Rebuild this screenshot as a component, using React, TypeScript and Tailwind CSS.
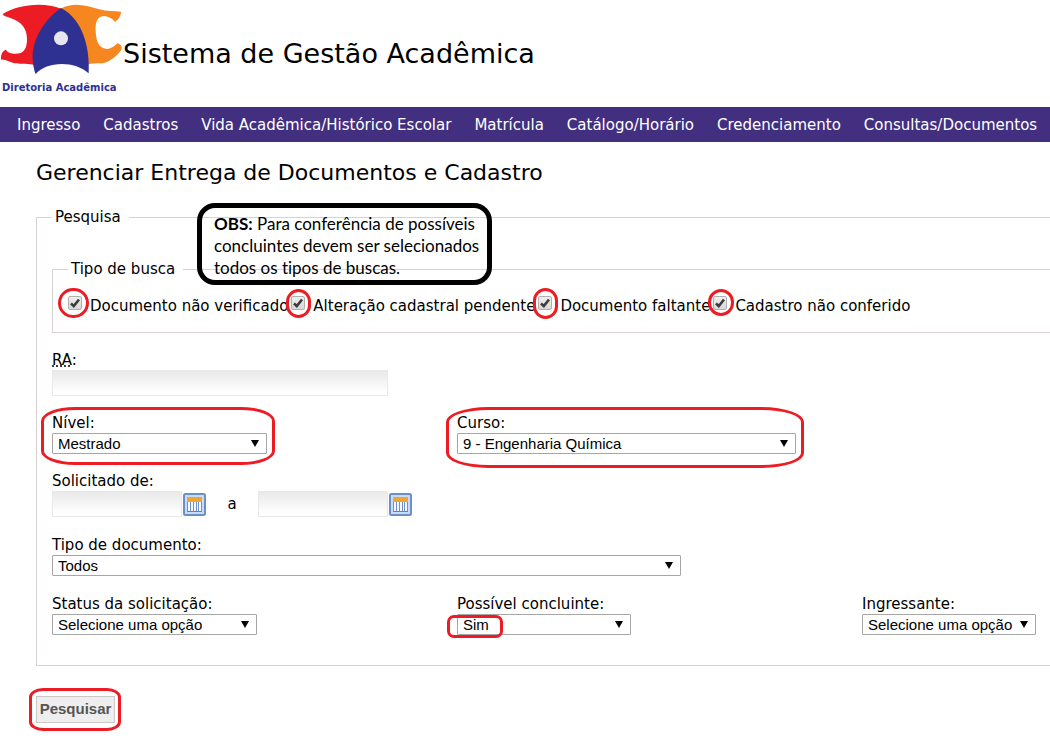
import { useId, type ReactNode } from "react";

const MENU = [
  "Ingresso",
  "Cadastros",
  "Vida Acadêmica/Histórico Escolar",
  "Matrícula",
  "Catálogo/Horário",
  "Credenciamento",
  "Consultas/Documentos",
];

const SEARCH_TYPES = [
  { label: "Documento não verificado", ring: "-left-[10px] -right-[7px] -top-[8px] -bottom-[8px]" },
  { label: "Alteração cadastral pendente", ring: "-left-[5px] -right-[6px] -top-[7px] -bottom-[8px]" },
  { label: "Documento faltante", ring: "-left-[5px] -right-[6px] -top-[8px] -bottom-[9px]" },
  { label: "Cadastro não conferido", ring: "-left-[5px] -right-[7px] -top-[7px] -bottom-[6px]" },
];

function Logo() {
  return (
    <div className="flex w-[122px] shrink-0 flex-col">
      <svg viewBox="0 0 366 240" className="h-20 w-full" aria-hidden="true">
        <path
          d="M8 42 C50 14 130 4 184 26 L110 196 C84 190 64 194 44 190 C28 186 14 176 3 179 C2 166 6 152 18 149 C24 162 48 164 64 158 C82 150 84 118 78 96 C70 66 40 56 12 47Z"
          fill="#ed1c24"
        />
        <path
          d="M182 26 C222 4 262 18 298 28 C320 34 344 34 363 35 C362 50 354 60 345 65 C330 48 308 42 296 54 C284 66 286 92 289 112 C292 136 308 150 326 146 C340 143 346 136 352 130 C366 134 368 146 362 152 C346 172 324 190 298 190 C286 190 276 190 262 194Z"
          fill="#f6861f"
        />
        <path
          d="M183 24 C132 58 98 120 98 170 C98 190 102 210 107 222 C140 182 226 182 266 220 C270 150 252 60 183 24Z"
          fill="#2e3192"
        />
        <circle cx="183" cy="115" r="21" fill="#e6e7ee" />
      </svg>
      <span className="pl-[2px] font-['DejaVu_Sans'] text-[10px] leading-4 font-bold whitespace-nowrap text-[#2e3192]">
        Diretoria Acadêmica
      </span>
    </div>
  );
}

// red highlight placed around its relative parent
function Mark({ className }: { className: string }) {
  return (
    <span
      aria-hidden="true"
      className={`pointer-events-none absolute border-[#ed1c24] ${className}`}
    />
  );
}

function CheckOption({ label, ring }: { label: string; ring: string }) {
  const id = useId();
  return (
    <div className="flex items-start">
      <span className="relative mr-2 h-[14px] w-[14px]">
        <input
          id={id}
          type="checkbox"
          defaultChecked
          className="peer block h-[14px] w-[14px] appearance-none rounded-xs border border-[#b0b0b0] bg-linear-to-b from-[#eeeeee] to-[#d8d8d8]"
        />
        <svg
          viewBox="0 0 14 14"
          className="pointer-events-none absolute inset-0 hidden peer-checked:block"
          aria-hidden="true"
        >
          <path d="M3 7.5 L5.8 10 L11 3.5" fill="none" stroke="#3c3c3c" strokeWidth="2.6" />
        </svg>
        <Mark className={`rounded-full border-[3px] ${ring}`} />
      </span>
      <label htmlFor={id} className="leading-5 whitespace-nowrap">
        {label}
      </label>
    </div>
  );
}

interface SelectFieldProps {
  label: string;
  options: string[];
  width: string;
  children?: ReactNode;
}

function SelectField({ label, options, width, children }: SelectFieldProps) {
  const id = useId();
  return (
    <div className={`relative ${width}`}>
      <label htmlFor={id} className="block leading-5 whitespace-nowrap">
        {label}
      </label>
      <div className="relative">
        <select
          id={id}
          className="block h-[21px] w-full appearance-none rounded-[1px] border border-[#a6a6a6] bg-white pl-[5px] font-['Liberation_Sans',Arial,sans-serif] text-[15px] leading-[19px]"
        >
          {options.map((o) => (
            <option key={o}>{o}</option>
          ))}
        </select>
        <svg
          viewBox="0 0 8 7"
          className="pointer-events-none absolute top-[7px] right-[8px] h-[7px] w-2"
          aria-hidden="true"
        >
          <path d="M0 0 H8 L4 7Z" fill="#000" />
        </svg>
      </div>
      {children}
    </div>
  );
}

function CalendarButton({ label }: { label: string }) {
  return (
    <button type="button" aria-label={label} className="ml-px h-[23px] w-[23px]">
      <svg viewBox="0 0 23 23" className="block h-full w-full">
        <rect x="1" y="1" width="21" height="21" rx="1.5" fill="#c9dcf5" stroke="#6a8fcb" strokeWidth="2" />
        <rect x="4" y="4" width="15" height="15" fill="#f4f8fe" />
        <rect x="4" y="4" width="15" height="5" fill="#f0a52c" />
        <path
          d="M4.5 9V19M7.5 9V19M10.5 9V19M13.5 9V19M15.5 9V19M18.5 9V19"
          stroke="#7391c4"
        />
        <path d="M4 18.5H19" stroke="#5f83c0" />
      </svg>
    </button>
  );
}

const inputClass =
  "block h-[26px] border border-[#e8e8ea] bg-linear-to-b from-[#e9e9e9] to-white to-90% px-1 outline-none";

export default function App() {
  return (
    <div className="min-h-screen overflow-x-hidden bg-white font-['DejaVu_Sans',Verdana,sans-serif] text-[15px] text-black">
      <header className="flex h-[107px] items-start">
        <Logo />
        <h1 className="pt-9 pl-px text-[27px] leading-9 whitespace-nowrap">
          Sistema de Gestão Acadêmica
        </h1>
      </header>

      <nav className="flex h-[35px] items-center gap-[23px] bg-[#432f7f] px-[17px] pt-[2px] text-white">
        {MENU.map((item) => (
          <a key={item} href="#" className="whitespace-nowrap">
            {item}
          </a>
        ))}
      </nav>

      <main className="pl-9">
        <h2 className="pt-4 text-[22px] leading-[30px]">Gerenciar Entrega de Documentos e Cadastro</h2>

        <form onSubmit={(e) => e.preventDefault()}>
          <div className="relative mt-[19px]">
            <fieldset className="min-w-0 border border-r-0 border-[#d9d2d5] pb-[30px] pl-[15px]">
              <legend className="pr-2 pl-[3px] leading-5">Pesquisa</legend>

              <fieldset className="mt-8 min-w-0 border border-r-0 border-[#d9d2d5] pb-4 pl-[15px]">
                <legend className="pr-2 pl-[3px] leading-5">Tipo de busca</legend>
                <div className="flex gap-[3px] pt-[17px]">
                  {SEARCH_TYPES.map((t) => (
                    <CheckOption key={t.label} label={t.label} ring={t.ring} />
                  ))}
                </div>
              </fieldset>

              <div className="mt-[17px]">
                <label htmlFor="ra" className="block leading-5">
                  <abbr title="Registro Acadêmico">RA</abbr>:
                </label>
                <input id="ra" type="text" className={`w-[336px] ${inputClass}`} />
              </div>

              <div className="mt-[17px] grid grid-cols-[1fr_1fr_188px]">
                <SelectField label="Nível:" options={["Mestrado", "Doutorado"]} width="w-[215px]">
                  <Mark className="-top-[6px] -right-[8px] -bottom-[11px] -left-[11px] rounded-[34px/14px] border-[3px]" />
                </SelectField>
                <SelectField label="Curso:" options={["9 - Engenharia Química"]} width="w-[339px]">
                  <Mark className="-top-[6px] -right-[8px] -bottom-[14px] -left-[11px] rounded-[42px/15px] border-[3px]" />
                </SelectField>
              </div>

              <div className="mt-[17px]">
                <label htmlFor="from" className="block leading-5">
                  Solicitado de:
                </label>
                <div className="flex items-center">
                  <input id="from" type="text" className={`w-[130px] ${inputClass}`} />
                  <CalendarButton label="Data inicial" />
                  <label htmlFor="to" className="w-[52px] text-center">
                    a
                  </label>
                  <input id="to" type="text" className={`w-[130px] ${inputClass}`} />
                  <CalendarButton label="Data final" />
                </div>
              </div>

              <div className="mt-[18px]">
                <SelectField label="Tipo de documento:" options={["Todos"]} width="w-[629px]" />
              </div>

              <div className="mt-[18px] grid grid-cols-[1fr_1fr_188px]">
                <SelectField
                  label="Status da solicitação:"
                  options={["Selecione uma opção"]}
                  width="w-[205px]"
                />
                <SelectField label="Possível concluinte:" options={["Sim", "Não"]} width="w-[174px]">
                  <Mark className="top-[21px] -bottom-[3px] -left-[10px] w-[56px] rounded-[7px] border-[3px]" />
                </SelectField>
                <SelectField
                  label="Ingressante:"
                  options={["Selecione uma opção", "Sim", "Não"]}
                  width="w-[174px]"
                />
              </div>
            </fieldset>

            <p className="absolute -top-[4px] left-[161px] rounded-[18px] border-[5px] border-black pt-[5px] pr-2 pb-px pl-3 font-[Lato,Calibri,sans-serif] text-[17px] leading-[22px] whitespace-nowrap [font-variant-ligatures:none]">
              <b>OBS:</b> Para conferência de possíveis
              <br />
              concluintes devem ser selecionados
              <br />
              todos os tipos de buscas.
            </p>
          </div>

          <div className="relative mt-[30px] w-fit">
            <button
              type="submit"
              className="block h-[27px] w-[79px] border border-[#c8c8c8] bg-[#eeeeee] font-['Liberation_Sans',Arial,sans-serif] text-[15px] font-bold text-[#555555]"
            >
              Pesquisar
            </button>
            <Mark className="-top-[8px] -right-[6px] -bottom-[8px] -left-[7px] rounded-[14px/9px] border-[3px]" />
          </div>
        </form>
      </main>
    </div>
  );
}
